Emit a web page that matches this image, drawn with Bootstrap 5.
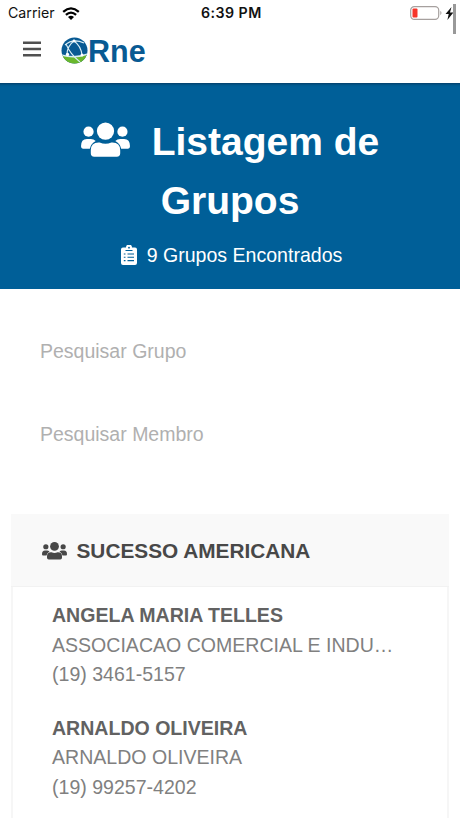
<!DOCTYPE html>
<html lang="pt-BR">
<head>
<meta charset="utf-8">
<meta name="viewport" content="width=device-width, initial-scale=1">
<title>Listagem de Grupos</title>
<link href="https://cdn.jsdelivr.net/npm/bootstrap@5.3.0/dist/css/bootstrap.min.css" rel="stylesheet">
<style>
body{font-family:"Liberation Sans",Arial,sans-serif;font-size:19.56px;line-height:29.6px;color:#808080;height:818px;overflow:hidden;background:#fff}
svg{display:block;flex:none}
.status{height:26px;font-family:Inter,sans-serif;font-size:14.2px;line-height:26px;color:#111;padding-left:8px}
.status .carrier{width:46px}
.status .clock{width:62px;margin-left:121px;font-weight:600;letter-spacing:.45px;white-space:nowrap}
.status .power{margin-left:147px}
.scroll-thumb{position:absolute;top:4px;left:453px;width:3px;height:30px;background:#999}
.topbar{height:57px;padding-left:23px;padding-bottom:12px}
.brand{margin-left:20px;margin-top:3px}
.brand-name{font-size:30.5px;font-weight:700;color:#085a93;line-height:30px;margin-top:1px}
.hero{height:206px;background:#005f98;box-shadow:inset 0 4px 3px -3px #053a60;padding-top:30px}
.hero h1{font-size:39px;line-height:58.5px;font-weight:700}
.hero h1 svg{display:inline-block;margin-right:22px;vertical-align:-3px}
.count{margin-top:11px;padding-left:3px}
.count svg{margin-top:-1px}
.count span{margin-left:10px}
.filters{padding:38px 40px 0;height:225px}
.filters input{height:48px;font-size:19.5px;color:#666}
.filters input::placeholder{color:#b0b0b0;opacity:1}
.filters input+input{margin-top:35px}
.group{margin:0 11px;border:0;border-radius:3px 3px 0 0}
.group-head{height:73px;background:#f9f9f9;border-bottom:1px solid #f2f2f2;color:#484848;font-size:20.8px;padding:1px 0 0 31px}
.group-head span{margin-left:9.5px}
.members{padding:14px 50px 0 39px;border:solid #f6f6f6;border-width:0 2px;height:240px}
.member{margin-bottom:24px}
.member strong{color:#626262;display:block}
</style>
<script src="https://cdn.jsdelivr.net/npm/bootstrap@5.3.0/dist/js/bootstrap.bundle.min.js" defer></script>
</head>
<body>
<svg width="0" height="0" class="position-absolute" aria-hidden="true">
<symbol id="people" viewBox="0 0 50 36">
<circle cx="25" cy="8.9" r="8.8"/><circle cx="7.7" cy="9.5" r="5.2"/><circle cx="42.3" cy="9.5" r="5.2"/>
<path d="M10 31.5v-3q0-8 8-8h1q6 2.6 12 0h1q8 0 8 8v3q0 3.5-3.5 3.5h-23Q10 35 10 31.5Z"/>
<path d="M0 24.500q0-7.500 6-7.500h4q3 0 5 2-5 2.500-6 8H2q-2 0-2-2.500ZM50 24.500q0-7.500-6-7.500h-4q-3 0-5 2 5 2.500 6 8h7q2 0 2-2.500Z"/>
</symbol>
</svg>
<div class="status d-flex align-items-center">
<span class="carrier">Carrier</span>
<svg class="ms-2" width="18" height="13" viewBox="0 0 18 13" fill="none" stroke="#000" stroke-width="2.3"><path d="M1.2 4.8Q9-2 16.8 4.8M3.9 7.8Q9 3.4 14.1 7.8"/><path d="M6 10Q9 7.5 12 10L9 13Z" fill="#000" stroke="none"/></svg>
<span class="clock">6:39 PM</span>
<svg class="power" width="46" height="16" viewBox="0 0 46 16"><rect x=".7" y="1.6" width="28" height="12.8" rx="3.6" fill="none" stroke="#a6a09e" stroke-width="1.2"/><rect x="2.500" y="3.500" width="5" height="9" rx="1" fill="#f6352a"/><path d="M30.3 5.8q2.4 2.2 0 4.5Z" fill="#a6a09e"/><path d="m41.500 2-6 7h3.200l-1.300 6 6-7.500H40Z" fill="#111"/></svg>
</div>
<div class="scroll-thumb"></div>
<header class="topbar d-flex align-items-center">
<svg width="18" height="16" viewBox="0 0 18 16" stroke="#505050" stroke-width="2.5"><path d="M0 1.700h18M0 8h18M0 14.300h18"/></svg>
<div class="d-flex align-items-center brand">
<svg width="27" height="27" viewBox="0 0 27 27"><defs><clipPath id="globe"><circle cx="13.5" cy="13.5" r="13"/></clipPath></defs><g clip-path="url(#globe)"><path fill="#085a93" d="M0 0h27v27H0z"/><path fill="#69b72d" d="M0 18q14 4 27-1v10H0Z"/><g fill="none" stroke="#d9edf5" stroke-width="1.1"><path d="M0 18q14 4 27-1" stroke-width="1.4"/><path d="M4 8Q12 1 23 6M13 4Q6 9 6 18M13 4q7 5 8 14M5 7q4 10 14 18"/></g><g fill="#fff"><circle cx="13" cy="4" r="1.4"/><circle cx="6.5" cy="17.5" r="1.7"/><circle cx="21" cy="18" r="1.5"/></g></g></svg>
<span class="brand-name">Rne</span>
</div>
</header>
<main>
<section class="hero text-white text-center">
<h1 class="mb-0"><svg width="49" height="36" fill="#fff"><use href="#people"/></svg>Listagem de<br>Grupos</h1>
<div class="count d-flex justify-content-center align-items-center">
<svg width="16" height="20" viewBox="0 0 16 20"><path fill="#fff" d="M2 2.5h3a3 3 0 0 1 6 0h3q2 0 2 2V18q0 2-2 2H2q-2 0-2-2V4.500q0-2 2-2Z"/><circle cx="8" cy="2.700" r=".9" fill="#005f98"/><path stroke="#005f98" stroke-width="1.1" d="M4.500 5.500h7M2.800 9h1.700M6.500 9h6.500M2.800 12.300h1.700M6.500 12.300h6.500M2.800 15.600h1.700M6.500 15.600h6.500"/></svg>
<span>9 Grupos Encontrados</span>
</div>
</section>
<form class="filters">
<input class="form-control border-0 shadow-none bg-transparent p-0" placeholder="Pesquisar Grupo" aria-label="Pesquisar Grupo">
<input class="form-control border-0 shadow-none bg-transparent p-0" placeholder="Pesquisar Membro" aria-label="Pesquisar Membro">
</form>
<section class="card group">
<div class="group-head d-flex align-items-center fw-bold"><svg width="25" height="18" fill="#484848"><use href="#people"/></svg><span>SUCESSO AMERICANA</span></div>
<div class="members">
<div class="member"><strong>ANGELA MARIA TELLES</strong><div class="text-nowrap">ASSOCIACAO COMERCIAL E INDU…</div><div>(19) 3461-5157</div></div>
<div class="member"><strong>ARNALDO OLIVEIRA</strong><div class="text-nowrap">ARNALDO OLIVEIRA</div><div>(19) 99257-4202</div></div>
</div>
</section>
</main>
</body>
</html>
